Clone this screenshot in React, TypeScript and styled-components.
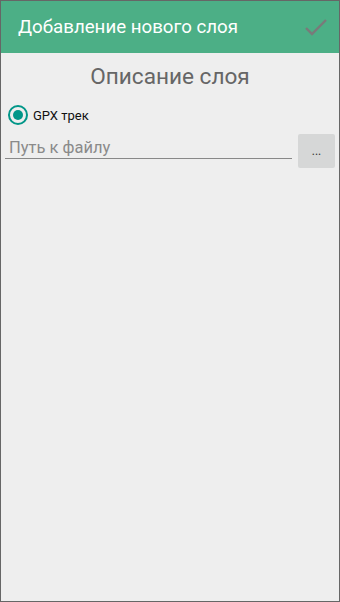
import * as React from 'react';
import styled, { createGlobalStyle } from 'styled-components';

const GlobalStyle = createGlobalStyle`
    html, body {
        margin: 0;
        padding: 0;
        background: #eeeeee;
    }
    * {
        box-sizing: border-box;
    }
`;

const Screen = styled.div`
    width: 340px;
    height: 602px;
    border: 1px solid #666666;
    background: #eeeeee;
    display: flex;
    flex-direction: column;
    font-family: Roboto, "Noto Sans", sans-serif;
`;

const Header = styled.header`
    height: 52px;
    background: #4caf86;
    display: flex;
    align-items: center;
    justify-content: space-between;
    padding: 0 9px 0 17px;
`;

const HeaderTitle = styled.h1`
    margin: 0;
    font-size: 18.7px;
    font-weight: 400;
    color: #ffffff;
`;

const ConfirmButton = styled.button`
    border: none;
    background: transparent;
    padding: 0;
    width: 28px;
    height: 28px;
    display: flex;
    align-items: center;
    justify-content: center;
`;

const Body = styled.main`
    flex: 1;
    display: flex;
    flex-direction: column;
    padding: 11px 4px 0 4px;
`;

const SectionTitle = styled.h2`
    margin: 0;
    text-align: center;
    font-size: 22.6px;
    font-weight: 400;
    color: #666666;
    line-height: 26px;
`;

const RadioRow = styled.label`
    display: flex;
    align-items: center;
    gap: 5px;
    margin-top: 15px;
    padding-left: 3px;
    font-size: 13px;
    color: #111111;
`;

const RadioOuter = styled.span`
    width: 20px;
    height: 20px;
    border-radius: 50%;
    border: 2px solid #009688;
    display: flex;
    align-items: center;
    justify-content: center;
`;

const RadioDot = styled.span`
    width: 10px;
    height: 10px;
    border-radius: 50%;
    background: #009688;
`;

const FileRow = styled.div`
    display: flex;
    align-items: flex-end;
    gap: 6px;
    margin-top: 9px;
`;

const PathInput = styled.input`
    flex: 1;
    min-width: 0;
    border: none;
    border-bottom: 1px solid #888888;
    background: transparent;
    font-family: Roboto, "Noto Sans", sans-serif;
    font-size: 16.5px;
    padding: 0 0 1px 4px;
    margin-bottom: 9px;
    outline: none;
    color: #333333;
    &::placeholder {
        color: #8a8a8a;
    }
`;

const BrowseButton = styled.button`
    width: 37px;
    height: 34px;
    border: none;
    border-radius: 2px;
    background: #d6d7d7;
    font-family: Roboto, "Noto Sans", sans-serif;
    font-size: 12px;
    color: #333333;
    padding: 0;
`;

export default function App() {
    return (
        <>
            <GlobalStyle />
            <Screen>
                <Header>
                    <HeaderTitle>Добавление нового слоя</HeaderTitle>
                    <ConfirmButton aria-label="OK">
                        <svg width="24" height="20" viewBox="0 0 24 20">
                            <path d="M2 11 L8 17 L22 3" fill="none" stroke="#7a7a7a" strokeWidth="2.4" />
                        </svg>
                    </ConfirmButton>
                </Header>
                <Body>
                    <SectionTitle>Описание слоя</SectionTitle>
                    <RadioRow>
                        <RadioOuter><RadioDot /></RadioOuter>
                        GPX трек
                    </RadioRow>
                    <FileRow>
                        <PathInput placeholder="Путь к файлу" />
                        <BrowseButton>...</BrowseButton>
                    </FileRow>
                </Body>
            </Screen>
        </>
    );
}
